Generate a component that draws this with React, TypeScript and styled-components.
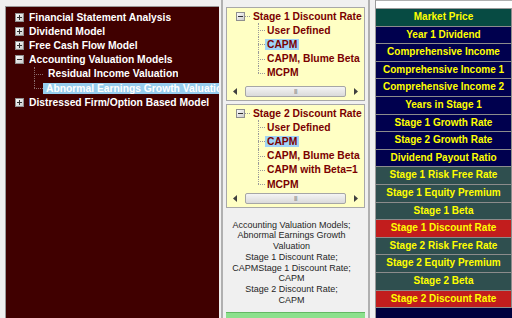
import styled, { createGlobalStyle } from 'styled-components'

const GlobalStyle = createGlobalStyle`
  html, body {
    margin: 0;
    padding: 0;
  }
  body {
    width: 512px;
    height: 318px;
    overflow: hidden;
    background: #f0f0f0;
    font-family: "Liberation Sans", Arial, sans-serif;
  }
`

type Tone = 'market' | 'navy' | 'slate' | 'red'

const inputs: { label: string; tone: Tone }[] = [
  { label: 'Market Price', tone: 'market' },
  { label: 'Year 1 Dividend', tone: 'navy' },
  { label: 'Comprehensive Income', tone: 'navy' },
  { label: 'Comprehensive Income 1', tone: 'navy' },
  { label: 'Comprehensive Income 2', tone: 'navy' },
  { label: 'Years in Stage 1', tone: 'navy' },
  { label: 'Stage 1 Growth Rate', tone: 'navy' },
  { label: 'Stage 2 Growth Rate', tone: 'navy' },
  { label: 'Dividend Payout Ratio', tone: 'navy' },
  { label: 'Stage 1 Risk Free Rate', tone: 'slate' },
  { label: 'Stage 1 Equity Premium', tone: 'slate' },
  { label: 'Stage 1 Beta', tone: 'slate' },
  { label: 'Stage 1 Discount Rate', tone: 'red' },
  { label: 'Stage 2 Risk Free Rate', tone: 'slate' },
  { label: 'Stage 2 Equity Premium', tone: 'slate' },
  { label: 'Stage 2 Beta', tone: 'slate' },
  { label: 'Stage 2 Discount Rate', tone: 'red' },
]

const toneColors: Record<Tone, string> = {
  market: '#074b43',
  navy: '#00004e',
  slate: '#2f4f4f',
  red: '#c21d1d',
}

function Expander({ open }: { open?: boolean }) {
  return (
    <ExpanderBox viewBox="0 0 9 9" width="9" height="9">
      <defs>
        <linearGradient id="exp" x1="0" y1="0" x2="1" y2="1">
          <stop offset="0" stopColor="#ffffff" />
          <stop offset="1" stopColor="#c8c8c8" />
        </linearGradient>
      </defs>
      <rect x="0.5" y="0.5" width="8" height="8" fill="url(#exp)" stroke="#8f8f8f" />
      <line x1="2" y1="4.5" x2="7" y2="4.5" stroke="#303030" />
      {!open && <line x1="4.5" y1="2" x2="4.5" y2="7" stroke="#303030" />}
    </ExpanderBox>
  )
}

function ScrollBar() {
  return (
    <Scroll>
      <Arrow viewBox="0 0 4 7" width="4" height="7">
        <polygon points="4,0 0,3.5 4,7" fill="#404040" />
      </Arrow>
      <Thumb>|||</Thumb>
      <Arrow viewBox="0 0 4 7" width="4" height="7">
        <polygon points="0,0 4,3.5 0,7" fill="#404040" />
      </Arrow>
    </Scroll>
  )
}

export default function App() {
  return (
    <>
      <GlobalStyle />
      <Window>
        <ModelPane>
          <ModelRow>
            <Expander />
            <ModelText>Financial Statement Analysis</ModelText>
          </ModelRow>
          <ModelRow>
            <Expander />
            <ModelText>Dividend Model</ModelText>
          </ModelRow>
          <ModelRow>
            <Expander />
            <ModelText>Free Cash Flow Model</ModelText>
          </ModelRow>
          <ModelRow>
            <Expander open />
            <ModelText>Accounting Valuation Models</ModelText>
          </ModelRow>
          <ModelChild>
            <Connector $color="#8a6a6a" $w={9} />
            <ModelText>Residual Income Valuation</ModelText>
          </ModelChild>
          <ModelChild>
            <Connector $color="#8a6a6a" $w={9} $last />
            <ModelText $selected>Abnormal Earnings Growth Valuation</ModelText>
          </ModelChild>
          <ModelRow>
            <Expander />
            <ModelText>Distressed Firm/Option Based Model</ModelText>
          </ModelRow>
        </ModelPane>

        <Splitter $w={7} $at={2} />

        <Middle>
          <TreeBox $h={94}>
            <RateRoot>
              <Expander open />
              <Dash />
              <RateText>Stage 1 Discount Rate</RateText>
            </RateRoot>
            <RateChild>
              <Connector $color="#9a9a9a" $w={7} />
              <RateText>User Defined</RateText>
            </RateChild>
            <RateChild>
              <Connector $color="#9a9a9a" $w={7} />
              <RateText $selected>CAPM</RateText>
            </RateChild>
            <RateChild>
              <Connector $color="#9a9a9a" $w={7} />
              <RateText>CAPM, Blume Beta</RateText>
            </RateChild>
            <RateChild>
              <Connector $color="#9a9a9a" $w={7} $last />
              <RateText>MCPM</RateText>
            </RateChild>
            <ScrollBar />
          </TreeBox>

          <TreeBox $h={104} $gap={3}>
            <RateRoot>
              <Expander open />
              <Dash />
              <RateText>Stage 2 Discount Rate</RateText>
            </RateRoot>
            <RateChild>
              <Connector $color="#9a9a9a" $w={7} />
              <RateText>User Defined</RateText>
            </RateChild>
            <RateChild>
              <Connector $color="#9a9a9a" $w={7} />
              <RateText $selected>CAPM</RateText>
            </RateChild>
            <RateChild>
              <Connector $color="#9a9a9a" $w={7} />
              <RateText>CAPM, Blume Beta</RateText>
            </RateChild>
            <RateChild>
              <Connector $color="#9a9a9a" $w={7} />
              <RateText>CAPM with Beta=1</RateText>
            </RateChild>
            <RateChild>
              <Connector $color="#9a9a9a" $w={7} $last />
              <RateText>MCPM</RateText>
            </RateChild>
            <ScrollBar />
          </TreeBox>

          <Summary>
            Accounting Valuation Models;
            <br />
            Abnormal Earnings Growth
            <br />
            Valuation
            <br />
            Stage 1 Discount Rate;
            <br />
            CAPMStage 1 Discount Rate;
            <br />
            CAPM
            <br />
            Stage 2 Discount Rate;
            <br />
            CAPM
          </Summary>
          <Progress />
        </Middle>

        <Splitter $w={10} $at={3} />

        <InputGrid>
          <GridHeader />
          {inputs.map((item) => (
            <InputCell key={item.label} $bg={toneColors[item.tone]}>
              {item.label}
            </InputCell>
          ))}
        </InputGrid>
      </Window>
    </>
  )
}

const Window = styled.div`
  display: flex;
  width: 512px;
  height: 318px;
  overflow: hidden;
`

const ModelPane = styled.div`
  flex: none;
  width: 213px;
  margin: 6px 0 0 5px;
  padding-top: 3px;
  background: #400000;
  border-left: 1px solid #9a9a9a;
  border-top: 1px solid #9a9a9a;
  overflow: hidden;
`

const ModelRow = styled.div`
  display: flex;
  align-items: center;
  height: 14.2px;
  padding-left: 9px;
  white-space: nowrap;
`

const ModelChild = styled(ModelRow)`
  padding-left: 28px;
`

const ExpanderBox = styled.svg`
  flex: none;
  display: block;
`

const ModelText = styled.span<{ $selected?: boolean }>`
  margin-left: ${(p) => (p.$selected ? '0' : '5px')};
  padding: 0 ${(p) => (p.$selected ? '3px' : '0')};
  line-height: 11px;
  font-size: 10.3px;
  font-weight: bold;
  color: #ffffff;
  background: ${(p) => (p.$selected ? '#97cdee' : 'transparent')};
  flex: ${(p) => (p.$selected ? '1' : 'none')};
  overflow: hidden;
`

const Connector = styled.span<{ $color: string; $w: number; $last?: boolean }>`
  position: relative;
  flex: none;
  align-self: stretch;
  width: ${(p) => p.$w}px;

  &::before {
    content: '';
    position: absolute;
    left: 0;
    top: 0;
    height: ${(p) => (p.$last ? '50%' : '100%')};
    border-left: 1px dotted ${(p) => p.$color};
  }

  &::after {
    content: '';
    position: absolute;
    left: 0;
    right: 0;
    top: 50%;
    border-top: 1px dotted ${(p) => p.$color};
  }
`

const Splitter = styled.div<{ $w: number; $at: number }>`
  flex: none;
  width: ${(p) => p.$w}px;
  background: linear-gradient(
    to right,
    transparent ${(p) => p.$at}px,
    #b0b0b0 ${(p) => p.$at}px,
    #b0b0b0 ${(p) => p.$at + 2}px,
    transparent ${(p) => p.$at + 2}px
  );
`

const Middle = styled.div`
  flex: none;
  width: 139px;
  padding-top: 7px;
  display: flex;
  flex-direction: column;
`

const TreeBox = styled.div<{ $h: number; $gap?: number }>`
  flex: none;
  box-sizing: border-box;
  height: ${(p) => p.$h}px;
  margin-top: ${(p) => p.$gap ?? 0}px;
  padding-top: 1px;
  display: flex;
  flex-direction: column;
  background: #ffffc4;
  border: 1px solid #a8a8a8;
  overflow: hidden;
`

const RateRoot = styled.div`
  display: flex;
  align-items: center;
  height: 14.2px;
  padding-left: 9px;
  white-space: nowrap;
`

const RateChild = styled(RateRoot)`
  padding-left: 31px;
`

const Dash = styled.span`
  flex: none;
  width: 5px;
  border-top: 1px dotted #9a9a9a;
  margin-right: 1px;
`

const RateText = styled.span<{ $selected?: boolean }>`
  padding: 0 2px;
  line-height: 11px;
  font-size: 10.3px;
  font-weight: bold;
  color: #7a0000;
  background: ${(p) => (p.$selected ? '#9fd3f7' : 'transparent')};
`

const Scroll = styled.div`
  margin-top: auto;
  margin-bottom: 2px;
  height: 13px;
  display: grid;
  grid-template-columns: 16px 1fr 16px;
  align-items: center;
  justify-items: center;
`

const Arrow = styled.svg`
  display: block;
`

const Thumb = styled.div`
  justify-self: stretch;
  margin: 0 2px;
  height: 11px;
  box-sizing: border-box;
  border: 1px solid #a6a6a6;
  border-radius: 2px;
  background: linear-gradient(#f4f4f4, #dadada);
  font-size: 6px;
  line-height: 9px;
  letter-spacing: -0.5px;
  text-align: center;
  color: #707070;
`

const Summary = styled.div`
  flex: 1;
  padding: 11.5px 8px 0 0;
  font-size: 9px;
  line-height: 10.8px;
  text-align: center;
  color: #262626;
`

const Progress = styled.div`
  flex: none;
  height: 5px;
  background: #8ce08c;
  border-top: 1px solid #62b862;
`

const InputGrid = styled.div`
  flex: none;
  width: 136px;
  background: #00003e;
  border-left: 1px solid #9a9a9a;
`

const GridHeader = styled.div`
  box-sizing: border-box;
  height: 9px;
  background: #ffffff;
  border-top: 1px solid #b0b0b0;
  border-bottom: 1px solid #9a9a9a;
`

const InputCell = styled.div<{ $bg: string }>`
  box-sizing: border-box;
  height: 17.6px;
  background: ${(p) => p.$bg};
  border-bottom: 1px solid #8c8c8c;
  border-right: 1px solid #8c8c8c;
  color: #ffff00;
  font-size: 10px;
  font-weight: bold;
  line-height: 16.6px;
  text-align: center;
  white-space: nowrap;
  overflow: hidden;
`
